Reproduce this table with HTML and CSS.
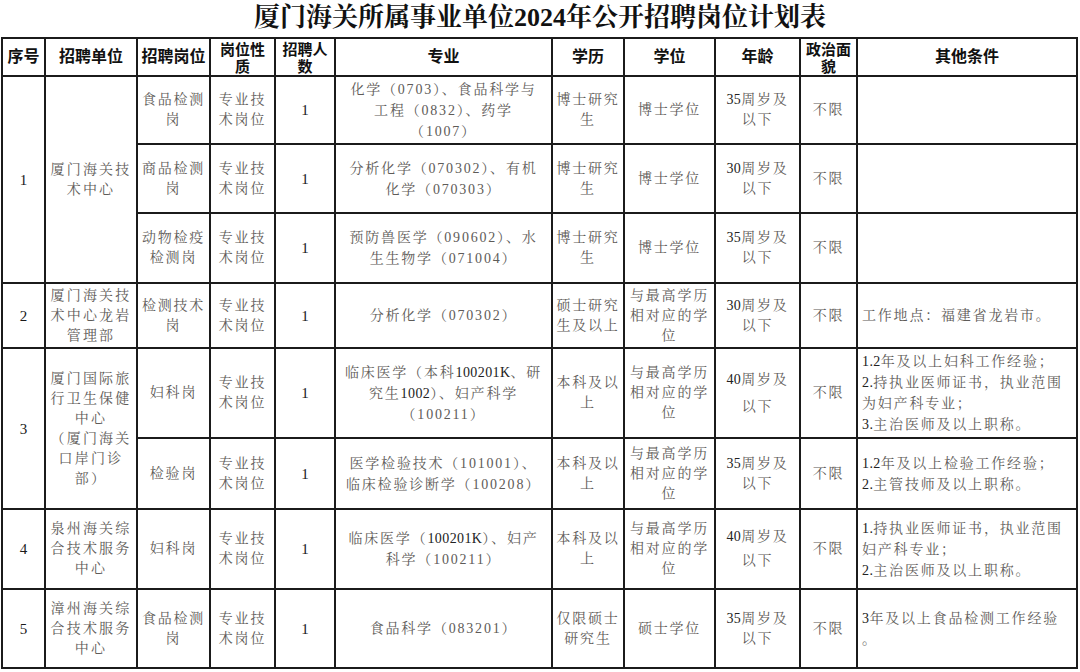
FILE: index.html
```html
<!DOCTYPE html>
<html lang="zh-CN">
<head>
<meta charset="utf-8">
<title>厦门海关所属事业单位2024年公开招聘岗位计划表</title>
<link rel="stylesheet" href="styles.css">
</head>
<body>
<h1 class="title">厦门海关所属事业单位2024年公开招聘岗位计划表</h1>
<table class="plan">
  <colgroup>
    <col class="c-no"><col class="c-unit"><col class="c-post"><col class="c-kind"><col class="c-cnt">
    <col class="c-major"><col class="c-edu"><col class="c-deg"><col class="c-age"><col class="c-pol"><col class="c-other">
  </colgroup>
  <thead>
    <tr class="h">
      <th>序号</th><th>招聘单位</th><th>招聘岗位</th><th class="two">岗位性<br>质</th><th class="two">招聘人<br>数</th>
      <th>专业</th><th>学历</th><th>学位</th><th>年龄</th><th class="two">政治面<br>貌</th><th>其他条件</th>
    </tr>
  </thead>
  <tbody>
    <tr class="r1a">
      <td rowspan="3" class="num">1</td>
      <td rowspan="3" class="unit">厦门海关技<br>术中心</td>
      <td>食品检测<br>岗</td>
      <td>专业技<br>术岗位</td>
      <td class="num">1</td>
      <td class="major">化学（0703）、食品科学与<br>工程（0832）、药学<br>（1007）</td>
      <td>博士研究<br>生</td>
      <td>博士学位</td>
      <td><span class="d">35</span>周岁及<br>以下</td>
      <td>不限</td>
      <td class="other"></td>
    </tr>
    <tr class="r1b">
      <td>商品检测<br>岗</td>
      <td>专业技<br>术岗位</td>
      <td class="num">1</td>
      <td class="major">分析化学（070302）、有机<br>化学（070303）</td>
      <td>博士研究<br>生</td>
      <td>博士学位</td>
      <td><span class="d">30</span>周岁及<br>以下</td>
      <td>不限</td>
      <td class="other"></td>
    </tr>
    <tr class="r1c">
      <td>动物检疫<br>检测岗</td>
      <td>专业技<br>术岗位</td>
      <td class="num">1</td>
      <td class="major">预防兽医学（090602）、水<br>生生物学（071004）</td>
      <td>博士研究<br>生</td>
      <td>博士学位</td>
      <td><span class="d">35</span>周岁及<br>以下</td>
      <td>不限</td>
      <td class="other"></td>
    </tr>
    <tr class="r2">
      <td class="num">2</td>
      <td class="unit">厦门海关技<br>术中心龙岩<br>管理部</td>
      <td>检测技术<br>岗</td>
      <td>专业技<br>术岗位</td>
      <td class="num">1</td>
      <td class="major">分析化学（070302）</td>
      <td>硕士研究<br>生及以上</td>
      <td>与最高学历<br>相对应的学<br>位</td>
      <td><span class="d">30</span>周岁及<br>以下</td>
      <td>不限</td>
      <td class="other">工作地点：福建省龙岩市。</td>
    </tr>
    <tr class="r3a">
      <td rowspan="2" class="num">3</td>
      <td rowspan="2" class="unit">厦门国际旅<br>行卫生保健<br>中心<br>（厦门海关<br>口岸门诊<br>部）</td>
      <td>妇科岗</td>
      <td>专业技<br>术岗位</td>
      <td class="num">1</td>
      <td class="major">临床医学（本科<span class="d">100201K</span>、研<br>究生<span class="d">1002</span>）、妇产科学<br>（100211）</td>
      <td>本科及以<br>上</td>
      <td>与最高学历<br>相对应的学<br>位</td>
      <td class="age-wide"><span class="d">40</span>周岁及<br>以下</td>
      <td>不限</td>
      <td class="other"><span class="d">1.2</span>年及以上妇科工作经验；<br><span class="d">2.</span>持执业医师证书，执业范围<br>为妇产科专业；<br><span class="d">3.</span>主治医师及以上职称。</td>
    </tr>
    <tr class="r3b">
      <td>检验岗</td>
      <td>专业技<br>术岗位</td>
      <td class="num">1</td>
      <td class="major">医学检验技术（101001）、<br>临床检验诊断学（100208）</td>
      <td>本科及以<br>上</td>
      <td>与最高学历<br>相对应的学<br>位</td>
      <td><span class="d">35</span>周岁及<br>以下</td>
      <td>不限</td>
      <td class="other"><span class="d">1.2</span>年及以上检验工作经验；<br><span class="d">2.</span>主管技师及以上职称。</td>
    </tr>
    <tr class="r4">
      <td class="num">4</td>
      <td class="unit">泉州海关综<br>合技术服务<br>中心</td>
      <td>妇科岗</td>
      <td>专业技<br>术岗位</td>
      <td class="num">1</td>
      <td class="major">临床医学（<span class="d">100201K</span>）、妇产<br>科学（100211）</td>
      <td>本科及以<br>上</td>
      <td>与最高学历<br>相对应的学<br>位</td>
      <td class="age-mid"><span class="d">40</span>周岁及<br>以下</td>
      <td>不限</td>
      <td class="other"><span class="d">1.</span>持执业医师证书，执业范围<br>妇产科专业；<br><span class="d">2.</span>主治医师及以上职称。</td>
    </tr>
    <tr class="r5">
      <td class="num">5</td>
      <td class="unit">漳州海关综<br>合技术服务<br>中心</td>
      <td>食品检测<br>岗</td>
      <td>专业技<br>术岗位</td>
      <td class="num">1</td>
      <td class="major">食品科学（083201）</td>
      <td>仅限硕士<br>研究生</td>
      <td>硕士学位</td>
      <td><span class="d">35</span>周岁及<br>以下</td>
      <td>不限</td>
      <td class="other"><span class="d">3</span>年及以上食品检测工作经验<br>。</td>
    </tr>
  </tbody>
</table>
</body>
</html>
```
FILE: styles.css
```css
html, body {
  margin: 0;
  padding: 0;
  background: #ffffff;
}

body {
  width: 1080px;
  height: 672px;
  overflow: hidden;
  font-family: "Liberation Serif", "Noto Serif CJK SC", "Noto Sans CJK SC", serif;
}

.title {
  margin: 0;
  height: 37px;
  line-height: 36px;
  text-align: center;
  font-size: 26px;
  font-weight: bold;
  color: #111;
  font-family: "Liberation Serif", "Noto Serif CJK SC", "Noto Sans CJK SC", serif;
  letter-spacing: 0;
}

.plan {
  margin-left: 1px;
  border-collapse: collapse;
  table-layout: fixed;
  width: 1076px;
}

.c-no { width: 43px; }
.c-unit { width: 92px; }
.c-post { width: 73px; }
.c-kind { width: 65px; }
.c-cnt { width: 60px; }
.c-major { width: 217px; }
.c-edu { width: 72px; }
.c-deg { width: 91px; }
.c-age { width: 85px; }
.c-pol { width: 57px; }
.c-other { width: 220px; }

.plan th,
.plan td {
  border: 2px solid #1b1b1b;
  padding: 0 1px;
  text-align: center;
  vertical-align: middle;
}

.plan th {
  font-family: "Liberation Sans", "Noto Sans CJK SC", sans-serif;
  font-weight: bold;
  font-size: 16px;
  line-height: 18px;
  color: #111;
  white-space: nowrap;
}

.plan th.two {
  font-size: 15px;
  line-height: 17px;
  padding-top: 2px;
}

.plan td {
  font-size: 14px;
  line-height: 20px;
  letter-spacing: 1.8px;
  color: #5e5b58;
  white-space: nowrap;
  overflow: hidden;
}

.plan td.num {
  color: #1a1a1a;
  font-size: 15px;
  letter-spacing: 0;
}

.plan td.unit {
  letter-spacing: 2.2px;
}

.plan td.major {
  line-height: 21px;
}

.plan td.other {
  text-align: left;
  padding-left: 4px;
  line-height: 21px;
}

.plan td.age-wide {
  line-height: 27px;
}

.plan td.age-mid {
  line-height: 24px;
}

.d {
  color: #222;
  letter-spacing: 0.4px;
}

.h { height: 38px; }
.r1a { height: 68px; }
.r1b { height: 69px; }
.r1c { height: 70px; }
.r2 { height: 65px; }
.r3a { height: 90px; }
.r3b { height: 71px; }
.r4 { height: 80px; }
.r5 { height: 79px; }
```
